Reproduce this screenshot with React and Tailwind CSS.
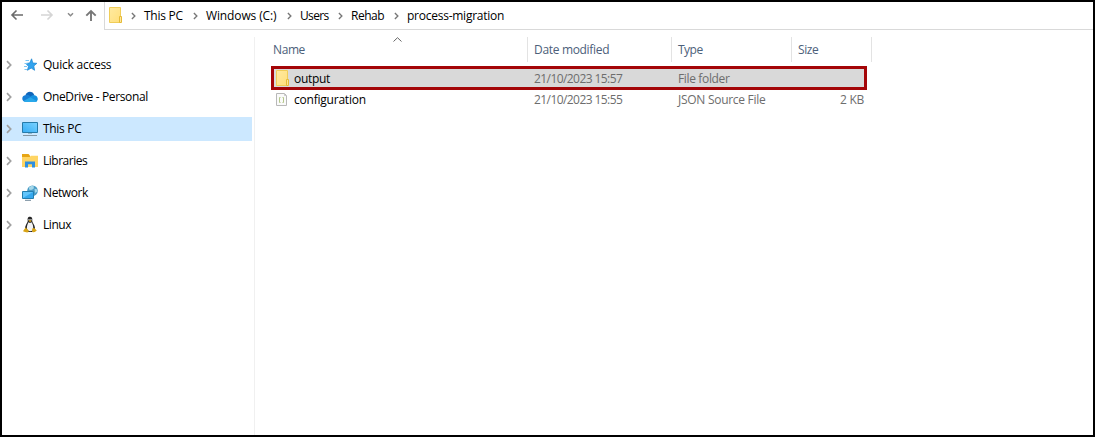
import React from "react";

function Chevron({ className = "", color = "#a0a0a0" }) {
  return (
    <svg width="6" height="10" viewBox="0 0 6 10" fill="none" stroke={color} strokeWidth="1.7" className={`shrink-0 ${className}`}>
      <path d="M1 1.2 4.7 5 1 8.8" />
    </svg>
  );
}

function FolderIcon() {
  return (
    <svg width="14" height="18" viewBox="0 0 14 18" className="shrink-0">
      <defs>
        <linearGradient id="folder" x1="0" y1="0" x2="1" y2="1">
          <stop offset="0" stopColor="#ffeaa0" />
          <stop offset="1" stopColor="#ffdf7c" />
        </linearGradient>
      </defs>
      <path d="M.5 1.5H11.5V16.5H.5Z" fill="url(#folder)" stroke="#f0cd58" />
      <path d="M10.5 10.5H12.5V16.5H10.5Z" fill="#ffe69a" stroke="#e5bb38" />
    </svg>
  );
}

function JsonIcon() {
  return (
    <svg width="12" height="15" viewBox="0 0 12 15" className="shrink-0">
      <path d="M.5 1.5H8.5L10.5 3.5V13.5H.5Z" fill="#fafafa" stroke="#b8b8b8" />
      <path d="M8.5 1.5V3.5H10.5" fill="none" stroke="#c8c8c8" />
      <path d="M4.5 5.5H3.5V10.5H4.5M6.5 5.5H7.5V10.5H6.5" fill="none" stroke="#b4c78a" />
    </svg>
  );
}

function StarIcon() {
  return (
    <svg width="16" height="16" viewBox="0 0 16 16">
      <path d="M9.6 1.8 10.8 6 14.9 6.3 11.8 9 12.6 13.3 9.2 11.1 5.4 13.3 6.5 9.3 3.8 6.5 7.7 6Z" fill="#31a3ee" stroke="#1683d0" strokeWidth=".7" />
      <path d="M3.5 3.5H7M2.5 6.5H5.5M2 9.5H5M2.5 12.5H5" stroke="#7cc5f3" strokeWidth="1" />
    </svg>
  );
}

function CloudIcon() {
  return (
    <svg width="16" height="16" viewBox="0 0 16 16">
      <path d="M3.4 6.5C4.5 1.7 10.8 1.4 12.4 6.2L8 9Z" fill="#1066ba" />
      <path d="M2.2 12.5C-.7 11.2-.3 6.4 3.5 6.3 5.6 5.3 7 6 9 8.2L9.8 12.5Z" fill="#177fd5" />
      <path d="M8.2 8.1C9.2 6.4 10.8 5.8 12.5 6.3 16 6.8 17 11.3 14 12.8L7 12Z" fill="#1490df" />
      <path d="M1.5 12 8.2 8.2 15 12.2Q14.3 13.1 12.5 13.1H3.7Q2.2 13 1.5 12Z" fill="#29a8ea" />
    </svg>
  );
}

function ComputerIcon() {
  return (
    <svg width="16" height="16" viewBox="0 0 16 16">
      <defs>
        <linearGradient id="screen" x1="0" y1="1" x2="1" y2="0">
          <stop offset="0" stopColor="#36adf5" />
          <stop offset="1" stopColor="#7bd2ff" />
        </linearGradient>
      </defs>
      <path d="M.5 1.5H15.5V11.5H.5Z" fill="url(#screen)" stroke="#277ba9" />
      <path d="M6 12H10V13H6Z" fill="#96b9ca" />
      <path d="M1 14.5H15" stroke="#8496a2" />
    </svg>
  );
}

function LibraryIcon() {
  return (
    <svg width="16" height="16" viewBox="0 0 16 16">
      <path d="M0 1H6.5L8 2.5V5H0Z" fill="#e7a514" />
      <path d="M0 4H7.5L9 2.7H16V14H0Z" fill="#ffd564" />
      <path d="M3 14.5V8.5H13V14.5H10V11.2H6V14.5Z" fill="#2f8fdf" />
    </svg>
  );
}

function NetworkIcon() {
  return (
    <svg width="16" height="16" viewBox="0 0 16 16">
      <circle cx="10.5" cy="5.8" r="5.3" fill="#4a9cc6" />
      <path d="M7 2.6 9.5.8 12 1.4 11.5 4 9 5 7 4.6ZM12.5 3.8 14.6 3.9 15.4 6.5 13 8Z" fill="#a4d7ea" />
      <path d="M.5 6.5H11.5V13.5H.5Z" fill="#62c5fb" stroke="#247eae" />
      <path d="M1 13 11 7V13Z" fill="#35a8ee" />
      <path d="M3 15.3H9" stroke="#71899a" />
    </svg>
  );
}

function PenguinIcon() {
  return (
    <svg width="16" height="18" viewBox="0 0 16 18">
      <path d="M8 .7C5.6.7 5.4 2.7 5.8 5.1 5.5 7 2.9 9.5 3 13L6.2 16H10L13 13C13.2 9.2 10.6 7.4 10.2 5.1 10.7 2.3 10 .7 8 .7Z" fill="#242424" />
      <path d="M6.4 6.2Q8 7.4 9.7 6.2C10.9 8.2 11.7 11 11 14.2Q8 16.5 5.4 14.2C4 11 5.5 8.4 6.4 6.2Z" fill="#f3f3f3" />
      <circle cx="7" cy="3.7" r=".7" fill="#eee" />
      <circle cx="9" cy="3.7" r=".7" fill="#eee" />
      <path d="M6.5 4.8 8 4.1 9.7 4.9 8 6Z" fill="#e8ad15" />
      <path d="M3.6 11.6 6.9 14.8Q6.8 16.5 5.2 16.5L1.3 15.4Q1.2 14 2.2 13.5ZM12.2 12 14.8 14.4Q12.3 16.6 10.8 16.3 9.7 15.8 10.2 12.5Z" fill="#d9a414" />
    </svg>
  );
}

const places = [
  { name: "Quick access", Icon: StarIcon, tracking: "tracking-[-0.24px]" },
  { name: "OneDrive - Personal", Icon: CloudIcon, tracking: "tracking-[-0.36px]" },
  { name: "This PC", Icon: ComputerIcon, active: true, tracking: "tracking-[-0.3px]" },
  { name: "Libraries", Icon: LibraryIcon, tracking: "tracking-[-0.48px]" },
  { name: "Network", Icon: NetworkIcon, tracking: "tracking-[-0.4px]" },
  { name: "Linux", Icon: PenguinIcon, tracking: "tracking-[-0.45px]" },
];

const crumbs = [
  { name: "This PC", width: "w-[62px]", tracking: "tracking-[-0.25px]" },
  { name: "Windows (C:)", width: "w-[94px]", tracking: "tracking-[-0.12px]" },
  { name: "Users", width: "w-[51px]", tracking: "tracking-[-0.65px]" },
  { name: "Rehab", width: "w-[56px]", tracking: "tracking-[-0.5px]" },
  { name: "process-migration", width: "w-[120px]", tracking: "tracking-[-0.25px]" },
];

function AddressBar() {
  return (
    <header className="flex h-7 shrink-0">
      <div className="flex w-[102px] shrink-0 items-center">
        <svg width="102" height="28" viewBox="0 0 102 28" fill="none" strokeWidth="1.6">
          <path d="M21 13H10M14.5 8.5 10 13 14.5 17.5" stroke="#6b6b6b" />
          <path d="M39 13H50M45.5 8.5 50 13 45.5 17.5" stroke="#d5d5d5" />
          <path d="M66 11.3 68.5 13.8 71 11.3" stroke="#8a8a8a" strokeWidth="1.5" />
          <path d="M89 19V9M84.3 13.7 89 9 93.7 13.7" stroke="#777" strokeWidth="1.9" />
        </svg>
      </div>
      <div className="flex min-w-0 flex-1 items-center border-b border-l border-[#d9d9d9] pl-1 text-black">
        <div className="mr-2 flex -translate-y-px"><FolderIcon /></div>
        {crumbs.map((item) => (
          <div key={item.name} className={`flex shrink-0 items-center ${item.width}`}>
            <Chevron color="#777" className="h-2 w-[5px]" />
            <span className={`ml-2 whitespace-nowrap ${item.tracking}`}>{item.name}</span>
          </div>
        ))}
      </div>
    </header>
  );
}

function Sidebar() {
  return (
    <nav className="flex w-[252px] shrink-0 flex-col gap-2 pt-[23px] text-black">
      {places.map(({ name, Icon, active, tracking }) => (
        <div key={name} className={`mr-0.5 flex h-6 items-center pl-1 ${active ? "bg-[#cce8ff]" : ""}`}>
          <Chevron />
          <span className="ml-[10px] mr-[5px] flex w-4">
            <Icon />
          </span>
          <span className={`whitespace-nowrap ${tracking}`}>{name}</span>
        </div>
      ))}
    </nav>
  );
}

function FileList() {
  return (
    <main className="mt-[7px] min-w-0 flex-1 border-l border-[#f0f0f0] text-[#6d6d6d]">
      <div className="relative flex h-[25px] w-[617px] items-center text-[#4c607a]">
        <svg className="absolute left-[138px] top-0" width="9" height="5" viewBox="0 0 9 5" fill="none" stroke="#666">
          <path d="M.5 4.5 4.5.7 8.5 4.5" />
        </svg>
        <div className="flex h-full w-[273px] items-center border-r border-[#e3e3e3] pl-[18px]"><span className="tracking-[-0.4px]">Name</span></div>
        <div className="flex h-full w-36 items-center border-r border-[#e3e3e3] pl-[6px]"><span className="tracking-[-0.32px]">Date modified</span></div>
        <div className="flex h-full w-[120px] items-center border-r border-[#e3e3e3] pl-[6px]"><span className="tracking-[-0.5px]">Type</span></div>
        <div className="flex h-full w-20 items-center border-r border-[#e3e3e3] pl-[6px]"><span className="tracking-[-0.4px]">Size</span></div>
      </div>
      <div className="ml-4 mt-1 flex h-6 w-[596px] items-center border-[3px] border-[#a40508] bg-[#d9d9d9]">
        <span className="ml-[2px] mr-[4px] flex w-[14px]"><FolderIcon /></span>
        <span className="w-[240px] pt-0.5 tracking-[-0.32px] text-black">output</span>
        <span className="w-36 pt-0.5 tracking-[-0.57px]">21/10/2023 15:57</span>
        <span className="pt-0.5 tracking-[-0.35px]">File folder</span>
      </div>
      <div className="ml-5 flex h-[19px] w-[589px] items-center">
        <span className="ml-px mr-[6px] flex w-3"><JsonIcon /></span>
        <span className="w-[240px] tracking-[-0.22px] text-black">configuration</span>
        <span className="w-36 tracking-[-0.57px]">21/10/2023 15:55</span>
        <span className="tracking-[-0.28px]">JSON Source File</span>
        <span className="ml-auto tracking-[-0.3px]">2 KB</span>
      </div>
    </main>
  );
}

export default function App() {
  return (
    <div className="flex h-[437px] w-[1095px] flex-col overflow-hidden border-2 border-black bg-white font-['Open_Sans','Noto_Sans',sans-serif] text-[12px] leading-4">
      <AddressBar />
      <div className="flex min-h-0 flex-1">
        <Sidebar />
        <FileList />
      </div>
    </div>
  );
}
